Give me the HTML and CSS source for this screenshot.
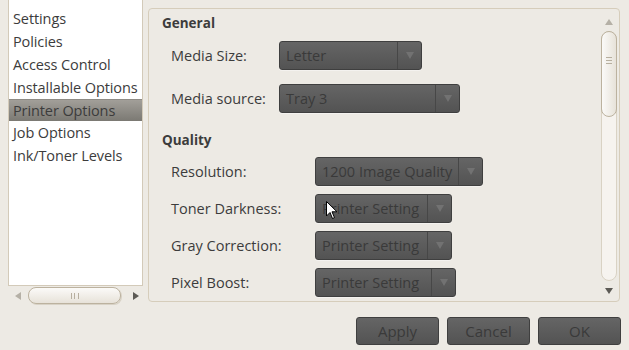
FILE: index.html
```html
<!DOCTYPE html>
<html>
<head>
    <meta charset="UTF-8">
    <meta name="viewport" content="width=device-width, initial-scale=1.0">
    <title>Printer Properties</title>
    <link rel="stylesheet" href="styles.css">
</head>
<body>
    <div class="dialog">
        <div class="main">
            <!-- Left list of pages -->
            <div class="sidebar">
                <ul class="page-list">
                    <li>Settings</li>
                    <li>Policies</li>
                    <li>Access Control</li>
                    <li>Installable Options</li>
                    <li class="selected">Printer Options</li>
                    <li>Job Options</li>
                    <li>Ink/Toner Levels</li>
                </ul>
                <div class="hscroll">
                    <span class="arrow-left"></span>
                    <div class="hslider"><span class="grip-v"></span></div>
                    <span class="arrow-right"></span>
                </div>
            </div>

            <!-- Options panel -->
            <div class="panel">
                <div class="panel-content">
                    <h3 class="section">General</h3>
                    <div class="row general">
                        <span class="label">Media Size:</span>
                        <div class="combo w142"><span class="value">Letter</span><span class="drop"></span></div>
                    </div>
                    <div class="row general gap14">
                        <span class="label">Media source:</span>
                        <div class="combo w180"><span class="value">Tray 3</span><span class="drop"></span></div>
                    </div>

                    <h3 class="section quality">Quality</h3>
                    <div class="row wide first">
                        <span class="label">Resolution:</span>
                        <div class="combo w167"><span class="value">1200 Image Quality</span><span class="drop"></span></div>
                    </div>
                    <div class="row wide">
                        <span class="label">Toner Darkness:</span>
                        <div class="combo w136"><span class="value">Printer Setting</span><span class="drop"></span></div>
                    </div>
                    <div class="row wide">
                        <span class="label">Gray Correction:</span>
                        <div class="combo w136"><span class="value">Printer Setting</span><span class="drop"></span></div>
                    </div>
                    <div class="row wide">
                        <span class="label">Pixel Boost:</span>
                        <div class="combo w140"><span class="value">Printer Setting</span><span class="drop"></span></div>
                    </div>
                </div>
                <div class="vscroll">
                    <span class="arrow-up"></span>
                    <div class="vtrough">
                        <div class="vslider"><span class="grip-h"></span></div>
                    </div>
                    <span class="arrow-down"></span>
                </div>
            </div>
        </div>

        <!-- Dialog buttons -->
        <div class="buttons">
            <button class="btn">Apply</button>
            <button class="btn">Cancel</button>
            <button class="btn">OK</button>
        </div>
    </div>

    <!-- Mouse pointer -->
    <svg class="pointer" width="12" height="19" viewBox="0 0 12 19">
        <path d="M0.5 0.5 L0.5 15 L4 11.5 L6.5 17.5 L8.5 16.6 L6 10.8 L11 10.8 Z" fill="#ffffff" stroke="#000000" stroke-width="1"/>
    </svg>
</body>
</html>
```

FILE: styles.css
```css
body {
    margin: 0;
    padding: 0;
    background-color: #edeae4;
    font-family: 'Open Sans', 'Noto Sans', sans-serif;
    font-size: 14.5px;
    color: #3c3c3c;
    width: 629px;
    height: 350px;
    overflow: hidden;
    position: relative;
}

.dialog {
    display: flex;
    flex-direction: column;
}

.main {
    display: flex;
    align-items: flex-start;
}

/* ---- left list ---- */

.sidebar {
    margin-left: 8px;
    width: 135px;
}

.page-list {
    list-style: none;
    margin: 0;
    padding: 7px 0 0 0;
    height: 278px;
    background-color: #ffffff;
    border: 1px solid #d3cab9;
    border-top: none;
}

.page-list li {
    height: 23px;
    line-height: 23px;
    padding-left: 4px;
    white-space: nowrap;
    letter-spacing: -0.1px;
}

.page-list li.selected {
    background: linear-gradient(#a29f99, #7b7973);
    border-top: 1px solid #8e8b85;
    height: 21px;
    line-height: 21px;
}

.hscroll {
    display: flex;
    align-items: center;
    height: 17px;
    margin-top: 1px;
}

.arrow-left {
    width: 0;
    height: 0;
    margin-left: 7px;
    border-top: 4px solid transparent;
    border-bottom: 4px solid transparent;
    border-right: 6px solid #b5b0a6;
}

.arrow-right {
    width: 0;
    height: 0;
    margin-left: 12px;
    border-top: 4px solid transparent;
    border-bottom: 4px solid transparent;
    border-left: 6px solid #5c5a55;
}

.hslider {
    margin-left: 7px;
    width: 91px;
    height: 15px;
    border: 1px solid #bcb29f;
    border-radius: 8px;
    background: linear-gradient(#fbfaf8, #e7e2d9);
    display: flex;
    align-items: center;
    justify-content: center;
    box-shadow: 1px 1px 0 #d8d2c6;
}

.grip-v {
    width: 6px;
    height: 6px;
    border-left: 1px solid #b7af9f;
    border-right: 1px solid #b7af9f;
    position: relative;
}

.grip-v::after {
    content: "";
    position: absolute;
    left: 2px;
    top: 0;
    width: 1px;
    height: 6px;
    background-color: #b7af9f;
}

/* ---- options panel ---- */

.panel {
    margin-top: 8px;
    margin-left: 5px;
    width: 470px;
    height: 292px;
    border: 1px solid #d6cdbb;
    border-radius: 4px;
    display: flex;
}

.panel-content {
    flex: 1;
    padding: 4px 0 0 13px;
}

.section {
    margin: 0;
    font-size: 13.5px;
    font-weight: bold;
    line-height: 20px;
    height: 20px;
}

.section.quality {
    margin-top: 17px;
}

.row {
    display: flex;
    align-items: center;
    margin-top: 8px;
}

.row.gap14 {
    margin-top: 14px;
}

.row.first {
    margin-top: 7px;
}

.row .label {
    padding-left: 9px;
    white-space: nowrap;
}

.row.general .label {
    width: 108px;
}

.row.wide .label {
    width: 144px;
}

.combo {
    height: 27px;
    border: 1px solid #3f3f3f;
    border-radius: 3px;
    background: linear-gradient(#656565, #535353);
    display: flex;
    align-items: center;
    color: #3a3a3a;
    box-shadow: 0 1px 0 rgba(255, 255, 255, 0.4);
}

.combo .value {
    flex: 1;
    padding-left: 6px;
    white-space: nowrap;
    overflow: hidden;
}

.combo .drop {
    width: 23px;
    height: 27px;
    border-left: 1px solid #474747;
    display: flex;
    align-items: center;
    justify-content: center;
}

.combo .drop::after {
    content: "";
    width: 0;
    height: 0;
    border-left: 4px solid transparent;
    border-right: 4px solid transparent;
    border-top: 7px solid #727272;
}

.w142 { width: 141px; }
.w180 { width: 179px; }
.w167 { width: 166px; }
.w136 { width: 135px; }
.w140 { width: 139px; }

/* ---- vertical scrollbar ---- */

.vscroll {
    width: 16px;
    margin-right: 2px;
    display: flex;
    flex-direction: column;
    align-items: center;
}

.arrow-up {
    margin-top: 10px;
    width: 0;
    height: 0;
    border-left: 4px solid transparent;
    border-right: 4px solid transparent;
    border-bottom: 6px solid #b5b0a6;
}

.arrow-down {
    margin-top: 7px;
    width: 0;
    height: 0;
    border-left: 4px solid transparent;
    border-right: 4px solid transparent;
    border-top: 6px solid #5c5a55;
}

.vtrough {
    margin-top: 6px;
    width: 14px;
    height: 248px;
    border: 1px solid #d9d2c4;
    border-radius: 8px;
    background-color: #f6f3ef;
}

.vslider {
    height: 84px;
    margin: -1px;
    border: 1px solid #bcb29f;
    border-radius: 8px;
    background: linear-gradient(90deg, #fbfaf8, #e7e2d9);
    display: flex;
    align-items: center;
    justify-content: center;
}

.grip-h {
    width: 6px;
    height: 5px;
    border-top: 1px solid #b7af9f;
    border-bottom: 1px solid #b7af9f;
    position: relative;
    top: -14px;
}

.grip-h::after {
    content: "";
    position: absolute;
    top: 2px;
    left: 0;
    width: 6px;
    height: 1px;
    background-color: #b7af9f;
}

/* ---- dialog buttons ---- */

.buttons {
    display: flex;
    justify-content: flex-end;
    gap: 8px;
    margin-top: 13px;
    margin-right: 8px;
}

.btn {
    width: 83px;
    height: 28px;
    border: 1px solid #3f3f3f;
    border-radius: 3px;
    background: linear-gradient(#656565, #535353);
    color: #3a3a3a;
    font-family: 'Open Sans', 'Noto Sans', sans-serif;
    font-size: 15px;
    padding: 0;
}

.pointer {
    position: absolute;
    left: 326px;
    top: 201px;
}
```
